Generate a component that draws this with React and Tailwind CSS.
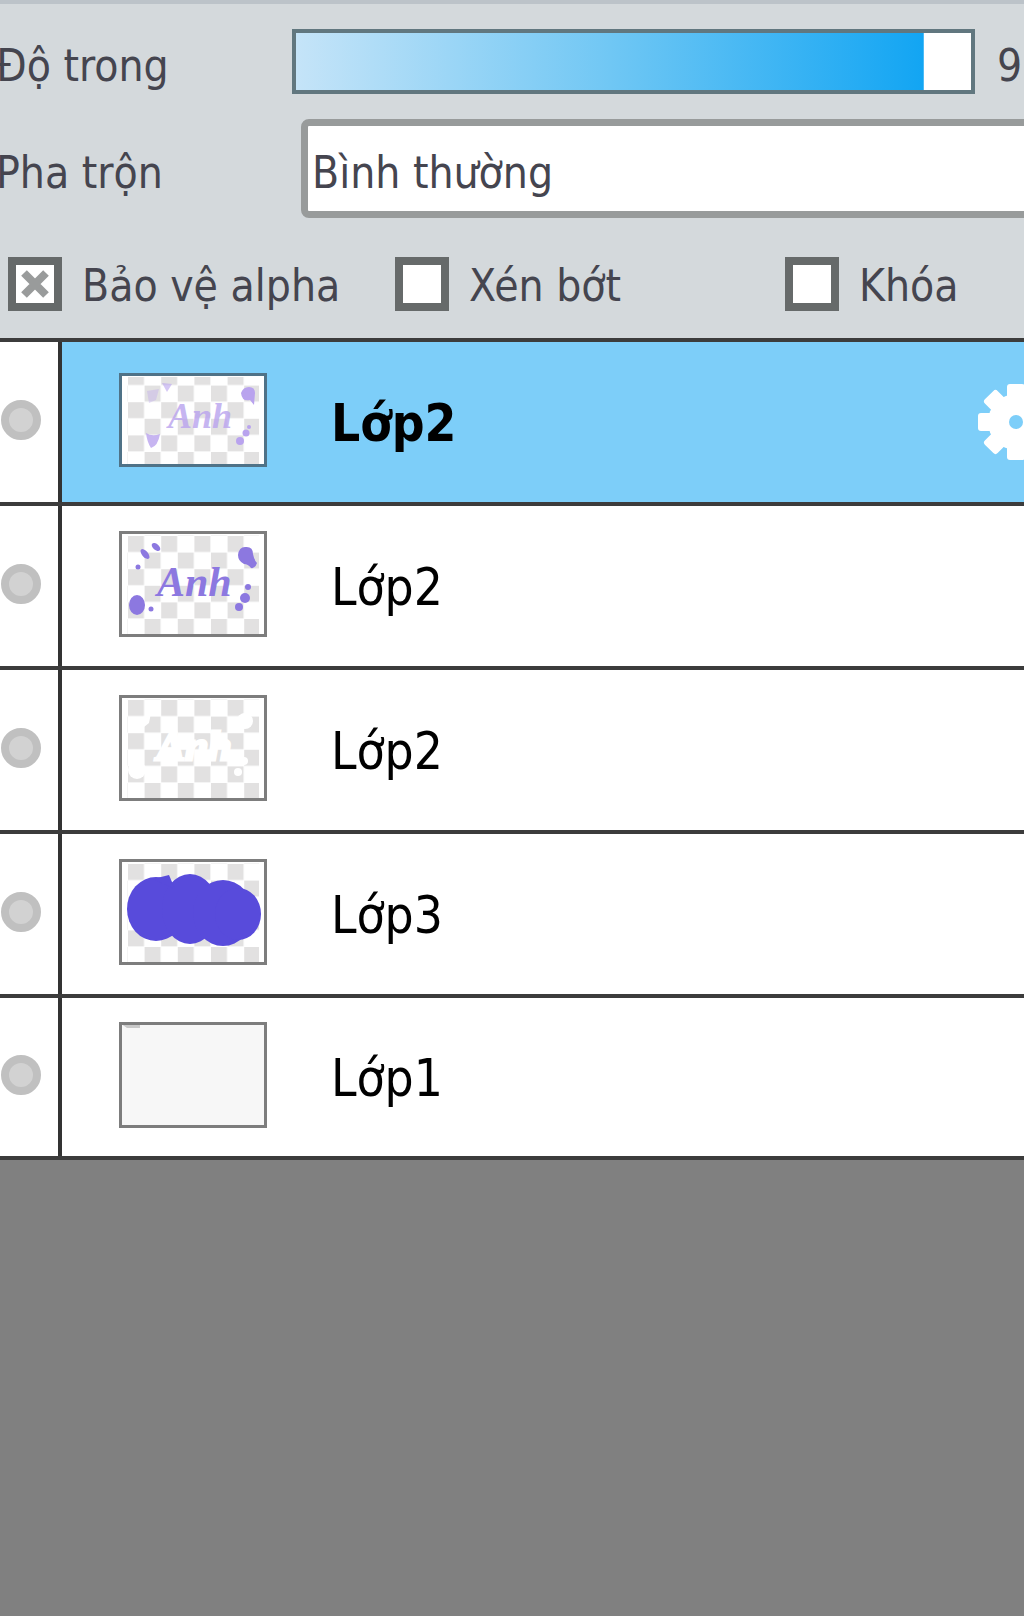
import React, { useState } from 'react';

const layers = [
    { id: 1, name: 'Lớp2', thumb: 'light' },
    { id: 2, name: 'Lớp2', thumb: 'strong' },
    { id: 3, name: 'Lớp2', thumb: 'white' },
    { id: 4, name: 'Lớp3', thumb: 'blob' },
    { id: 5, name: 'Lớp1', thumb: 'paper' },
];

const Checker = ({ id, y = 5 }) => (
    <>
        <defs>
            <pattern id={id} x="9" y={y} width="33.2" height="33.2" patternUnits="userSpaceOnUse">
                <rect width="16" height="16" fill="#e2e1e1" />
                <rect x="16.6" y="16.6" width="16" height="16" fill="#e2e1e1" />
            </pattern>
        </defs>
        <rect width="148" height="106" fill="#fff" />
        <rect x="8" y="4" width="132" height="99" fill={`url(#${id})`} />
    </>
);

const LightArt = () => (
    <>
        <Checker id="checker-light" y={-4} />
        <g fill="#b9a3ee">
            <text x="49" y="55" fontSize="36" className="font-['Liberation_Serif'] font-bold italic" opacity="0.8">Anh</text>
            <path d="M122 20q2-6 8-6t6 6l-1 12-4-5q-8 2-9-7z" />
            <path d="M27 60q6 4 14 1-2 12-9 14-4-6-5-15z" opacity="0.8" />
            <circle cx="127" cy="60" r="3.5" />
            <circle cx="121" cy="68" r="4" />
            <circle cx="130" cy="54" r="2" />
            <path d="M43 10l10 1-5 8z" opacity="0.6" />
            <path d="M28 18l12-2-3 11-7 3z" opacity="0.35" />
        </g>
    </>
);

const StrongArt = () => (
    <>
        <Checker id="checker-strong" />
        <g fill="#8c78e0">
            <text x="38" y="65" fontSize="42" className="font-['Liberation_Serif'] font-bold italic">Anh</text>
            <path d="M119 24q1-8 7-8 8-1 8 7 1 6 4 9-2 6-6 5-3-4-7-4-6-3-6-9z" />
            <ellipse cx="18" cy="74" rx="8" ry="10" />
            <ellipse cx="26" cy="23" rx="3" ry="6" transform="rotate(-40 26 23)" />
            <ellipse cx="37" cy="16" rx="3" ry="5" transform="rotate(-50 37 16)" />
            <circle cx="19" cy="36" r="2.5" />
            <circle cx="32" cy="78" r="2.5" />
            <circle cx="129" cy="56" r="3" />
            <circle cx="126" cy="67" r="5" />
            <circle cx="120" cy="76" r="4" />
        </g>
    </>
);

const WhiteArt = () => (
    <>
        <Checker id="checker-white" />
        <g fill="#fff">
            <text x="38" y="65" fontSize="42" stroke="#fff" strokeWidth="3" className="font-['Liberation_Serif'] font-bold italic">Anh</text>
            <path d="M24 22l8-4-2 10-5 4z" />
            <circle cx="18" cy="75" r="9" />
            <circle cx="126" cy="26" r="8" />
            <circle cx="125" cy="66" r="4" />
            <circle cx="119" cy="77" r="4" />
        </g>
    </>
);

const BlobArt = () => (
    <>
        <Checker id="checker-blob" />
        <g fill="#584bdb">
            <ellipse cx="37" cy="50" rx="29" ry="32" />
            <ellipse cx="71" cy="50" rx="28" ry="35" />
            <ellipse cx="104" cy="54" rx="30" ry="33" />
            <ellipse cx="119" cy="55" rx="23" ry="26" />
            <path d="M34 20l16-4 6 14z" />
        </g>
    </>
);

const PaperArt = () => (
    <>
        <rect width="148" height="106" fill="#f7f7f7" />
        <path d="M1 1h20v5H8z" fill="#c9c9c9" />
    </>
);

const art = {
    light: LightArt,
    strong: StrongArt,
    white: WhiteArt,
    blob: BlobArt,
    paper: PaperArt,
};

const Thumbnail = ({ kind }) => {
    const Art = art[kind];
    const height = kind === 'light' ? 94 : 106;

    return (
        <svg width="148" height={height} viewBox={`0 0 148 ${height}`} className="shrink-0" aria-hidden="true">
            <Art />
            <rect x="1.5" y="1.5" width="145" height={height - 3} fill="none" stroke={kind === 'light' ? '#4f7287' : '#7d7d7d'} strokeWidth="3" />
        </svg>
    );
};

const GearIcon = () => (
    <svg width="76" height="76" viewBox="-38 -38 76 76" aria-hidden="true">
        <g fill="#fff">
            {[0, 45, 90, 135].map((angle) => (
                <rect key={angle} x="-9" y="-38" width="18" height="76" rx="3" transform={`rotate(${angle})`} />
            ))}
            <circle r="28" />
        </g>
        <circle r="7" fill="#7dcef9" />
    </svg>
);

const CheckOption = ({ label, checked, onChange }) => (
    <label className="flex items-center gap-5 whitespace-nowrap">
        <span className="grid shrink-0 place-items-center">
            <input
                type="checkbox"
                checked={checked}
                onChange={onChange}
                className="col-start-1 row-start-1 size-[54px] appearance-none border-8 border-[#666a6a] bg-white"
            />
            {checked && (
                <svg width="28" height="28" viewBox="0 0 28 28" className="pointer-events-none col-start-1 row-start-1" aria-hidden="true">
                    <path d="M3 3l22 22M25 3L3 25" stroke="#999b9b" strokeWidth="8" />
                </svg>
            )}
        </span>
        <span className="pt-1">{label}</span>
    </label>
);

const App = () => {
    const [opacity, setOpacity] = useState(93);
    const [blend, setBlend] = useState('normal');
    const [options, setOptions] = useState({ alpha: true, clip: false, lock: false });
    const [active, setActive] = useState(1);

    const toggle = (key) => setOptions({ ...options, [key]: !options[key] });

    return (
        <div className="min-h-screen overflow-hidden bg-[#808080] font-['DejaVu_Sans_Condensed','DejaVu_Sans',sans-serif]">
            <div className="h-[338px] border-t-4 border-[#bcc3c9] bg-[#d4d9dc] text-[44px] leading-[56px] text-[#45454f]">
                {/* Opacity */}
                <div className="-ml-1 flex items-center pt-[25px]">
                    <label htmlFor="opacity" className="w-[296px] shrink-0 pt-2 whitespace-nowrap">Độ trong</label>
                    <input
                        id="opacity"
                        type="range"
                        min="0"
                        max="100"
                        value={opacity}
                        onChange={(e) => setOpacity(Number(e.target.value))}
                        className="h-[65px] min-w-0 flex-1 appearance-none border-4 border-[#61777f] bg-white bg-linear-to-r/srgb from-[#c5e4f8] via-[#70c7f4] to-[#12a5f3] bg-no-repeat [&::-webkit-slider-thumb]:size-0 [&::-webkit-slider-thumb]:appearance-none"
                        style={{ backgroundSize: `${opacity}% 100%` }}
                    />
                    <output htmlFor="opacity" className="ml-[22px] w-[27px] shrink-0 pt-2">{opacity}</output>
                </div>

                {/* Blend mode */}
                <div className="-ml-1 flex items-center pt-[25px]">
                    <label htmlFor="blend" className="w-[305px] shrink-0 pt-2 whitespace-nowrap">Pha trộn</label>
                    <select
                        id="blend"
                        value={blend}
                        onChange={(e) => setBlend(e.target.value)}
                        className="-mr-4 h-[99px] min-w-0 flex-1 appearance-none rounded-lg border-[7px] border-[#989b9b] bg-white pt-2 pl-1"
                    >
                        <option value="normal">Bình thường</option>
                    </select>
                </div>

                {/* Layer options */}
                <div className="grid grid-cols-[387px_390px_auto] pt-9 pl-2">
                    <CheckOption label="Bảo vệ alpha" checked={options.alpha} onChange={() => toggle('alpha')} />
                    <CheckOption label="Xén bớt" checked={options.clip} onChange={() => toggle('clip')} />
                    <CheckOption label="Khóa" checked={options.lock} onChange={() => toggle('lock')} />
                </div>
            </div>

            <ul className="border-b-4 border-[#3c3c3c] bg-white text-[51px] leading-[60px] text-black">
                {layers.map((layer) => {
                    const selected = layer.id === active;

                    return (
                        <li key={layer.id} className="flex h-[164px] border-t-4 border-[#3c3c3c] last:h-[162px]">
                            <div className="flex w-[62px] shrink-0 items-center border-r-4 border-[#333] pb-1 pl-px">
                                <span className="size-10 rounded-full border-8 border-[#c0c0c0] bg-[#d2d2d2]" />
                            </div>
                            <button
                                type="button"
                                onClick={() => setActive(layer.id)}
                                className={`flex min-w-0 flex-1 items-center pb-1 pl-[57px] text-left ${selected ? 'bg-[#7dcef9] font-bold' : ''}`}
                            >
                                <Thumbnail kind={layer.thumb} />
                                <span className="ml-16 flex-1 pt-2">{layer.name}</span>
                                {selected && (
                                    <span className="-mr-[30px] shrink-0 pt-1">
                                        <GearIcon />
                                    </span>
                                )}
                            </button>
                        </li>
                    );
                })}
            </ul>
        </div>
    );
};

export default App;
